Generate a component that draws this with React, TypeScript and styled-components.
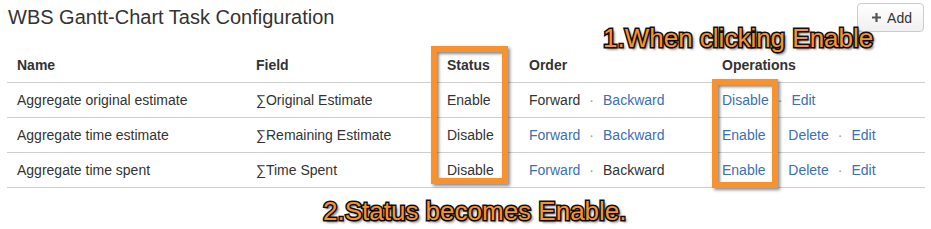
import React from 'react'
import styled, { createGlobalStyle } from 'styled-components'

const TEXT = '#333333'
const LINK = '#3b6fb6'
const LINE = '#cfcfcf'
const ORANGE = '#f7922f'

const GlobalStyle = createGlobalStyle`
  html, body {
    margin: 0;
    padding: 0;
    background: #ffffff;
  }
  body {
    font-family: "Liberation Sans", Arial, Helvetica, sans-serif;
    font-size: 14px;
    color: ${TEXT};
  }
`

const Page = styled.div`
  position: relative;
  width: 931px;
  height: 229px;
  padding: 0 6px 0 7px;
  box-sizing: border-box;
  overflow: hidden;
`

const TopBar = styled.div`
  display: flex;
  justify-content: space-between;
  align-items: flex-start;
  height: 47px;
`

const Title = styled.h1`
  margin: 6px 0 0 1px;
  font-size: 20px;
  line-height: 22px;
  font-weight: normal;
  color: ${TEXT};
`

const AddButton = styled.button`
  display: flex;
  align-items: center;
  gap: 6px;
  margin: 3px 1px 0 0;
  height: 29px;
  padding: 0 11px 0 14px;
  box-sizing: border-box;
  border: 1px solid #cccccc;
  border-radius: 4px;
  background: linear-gradient(#ffffff, #f0f0f0);
  font-family: inherit;
  font-size: 14px;
  color: ${TEXT};
`

const Table = styled.div`
  display: flex;
  flex-direction: column;
`

const Row = styled.div<{ $head?: boolean }>`
  display: grid;
  grid-template-columns: 239px 191px 82px 193px 1fr;
  align-items: center;
  height: 34px;
  padding-top: ${({ $head }) => ($head ? '1px' : '0')};
  box-sizing: content-box;
  border-bottom: 1px solid ${LINE};
  font-weight: ${({ $head }) => ($head ? 'bold' : 'normal')};
  line-height: 20px;
`

const Cell = styled.div`
  padding-left: 10px;
  white-space: nowrap;
`

const Action = styled.a<{ $plain?: boolean }>`
  color: ${({ $plain }) => ($plain ? TEXT : LINK)};
  text-decoration: none;
  cursor: ${({ $plain }) => ($plain ? 'default' : 'pointer')};
`

const Sep = styled.span`
  margin: 0 9px;
  color: #999999;
`

const Highlight = styled.div<{ $x: number; $y: number; $w: number; $h: number }>`
  position: absolute;
  left: ${({ $x }) => $x}px;
  top: ${({ $y }) => $y}px;
  width: ${({ $w }) => $w}px;
  height: ${({ $h }) => $h}px;
  box-sizing: border-box;
  border: 6px solid ${ORANGE};
  box-shadow: 2px 2px 3px rgba(0, 0, 0, 0.45), inset 2px 2px 3px rgba(0, 0, 0, 0.45);
  pointer-events: none;
`

const Note = styled.div<{ $x: number; $y: number }>`
  position: absolute;
  left: ${({ $x }) => $x}px;
  top: ${({ $y }) => $y}px;
  font-family: "Liberation Sans", Arial, sans-serif;
  font-size: 26px;
  line-height: 26px;
  color: ${ORANGE};
  -webkit-text-stroke: 3px #111111;
  paint-order: stroke fill;
  text-shadow: 2px 2px 3px rgba(0, 0, 0, 0.8);
  white-space: nowrap;
  pointer-events: none;
`

const PlusIcon = () => (
  <svg width="9" height="9" viewBox="0 0 9 9">
    <path d="M3.4 0h2.2v3.4H9v2.2H5.6V9H3.4V5.6H0V3.4h3.4z" fill="#555555" />
  </svg>
)

type Link = { label: string; plain?: boolean }

type Task = {
  name: string
  field: string
  status: string
  order: Link[]
  ops: Link[]
}

const tasks: Task[] = [
  {
    name: 'Aggregate original estimate',
    field: '∑Original Estimate',
    status: 'Enable',
    order: [{ label: 'Forward', plain: true }, { label: 'Backward' }],
    ops: [{ label: 'Disable' }, { label: 'Edit' }],
  },
  {
    name: 'Aggregate time estimate',
    field: '∑Remaining Estimate',
    status: 'Disable',
    order: [{ label: 'Forward' }, { label: 'Backward' }],
    ops: [{ label: 'Enable' }, { label: 'Delete' }, { label: 'Edit' }],
  },
  {
    name: 'Aggregate time spent',
    field: '∑Time Spent',
    status: 'Disable',
    order: [{ label: 'Forward' }, { label: 'Backward', plain: true }],
    ops: [{ label: 'Enable' }, { label: 'Delete' }, { label: 'Edit' }],
  },
]

const LinkList = ({ links }: { links: Link[] }) => (
  <>
    {links.map((l, i) => (
      <React.Fragment key={l.label}>
        {i > 0 && <Sep>·</Sep>}
        <Action $plain={l.plain}>{l.label}</Action>
      </React.Fragment>
    ))}
  </>
)

export default function App() {
  return (
    <Page>
      <GlobalStyle />
      <TopBar>
        <Title>WBS Gantt-Chart Task Configuration</Title>
        <AddButton>
          <PlusIcon />
          Add
        </AddButton>
      </TopBar>
      <Table>
        <Row $head>
          <Cell>Name</Cell>
          <Cell>Field</Cell>
          <Cell>Status</Cell>
          <Cell>Order</Cell>
          <Cell>Operations</Cell>
        </Row>
        {tasks.map((t) => (
          <Row key={t.name}>
            <Cell>{t.name}</Cell>
            <Cell>{t.field}</Cell>
            <Cell>{t.status}</Cell>
            <Cell>
              <LinkList links={t.order} />
            </Cell>
            <Cell>
              <LinkList links={t.ops} />
            </Cell>
          </Row>
        ))}
      </Table>

      <Highlight $x={431} $y={46} $w={77} $h={138} />
      <Highlight $x={712} $y={79} $w={66} $h={109} />
      <Note $x={603} $y={25}>1.When clicking Enable</Note>
      <Note $x={323} $y={198}>2.Status becomes Enable.</Note>
    </Page>
  )
}
